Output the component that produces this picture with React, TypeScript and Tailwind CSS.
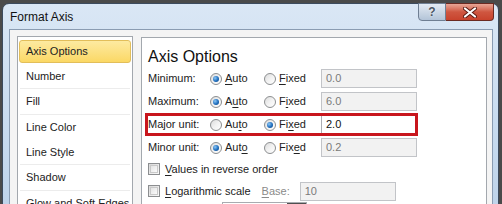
import React from "react";

const M = ({ children }: { children: React.ReactNode }) => (
  <span className="underline underline-offset-[2px] decoration-[1px]">{children}</span>
);

const Radio = ({ checked }: { checked?: boolean }) => (
  <span className="w-[12px] h-[12px] rounded-full border border-[#8c8e90] bg-gradient-to-br from-[#dcdcdc] via-[#f2f2f2] to-[#ffffff] flex items-center justify-center shrink-0">
    {checked && (
      <span className="w-[6px] h-[6px] rounded-full bg-[radial-gradient(circle_at_35%_35%,#8cc8f7,#1f6dbd_55%,#0b447f)]" />
    )}
  </span>
);

const Check = () => (
  <span className="w-[12px] h-[12px] border border-[#8c8e90] bg-gradient-to-br from-[#d8d8d8] to-[#fafafa] p-[1px] shrink-0">
    <span className="block w-full h-full border border-[#c9c9c9] bg-gradient-to-br from-[#e4e4e4] to-[#fbfbfb]" />
  </span>
);

const Box = ({ value, enabled }: { value: string; enabled?: boolean }) => (
  <div
    className={
      enabled
        ? "w-[96px] h-[19px] border border-[#abadb3] bg-white text-[#111] pl-[4px] flex items-center"
        : "w-[96px] h-[19px] border border-[#c2c4c8] bg-[#f2f2f2] text-[#7a7a7a] pl-[4px] flex items-center"
    }
  >
    {value}
  </div>
);

const Row = ({
  label,
  auto,
  fixed,
  autoChecked,
  value,
  enabled,
  highlight,
  h,
}: {
  label: string;
  auto: React.ReactNode;
  fixed: React.ReactNode;
  autoChecked: boolean;
  value: string;
  enabled?: boolean;
  highlight?: boolean;
  h: string;
}) => (
  <div className={`relative flex items-center ${h}`}>
    <span className="w-[62px] text-[#222]">{label}</span>
    <div className="w-[54px] flex items-center">
      <Radio checked={autoChecked} />
      <span className="ml-[3px] text-[#222]">{auto}</span>
    </div>
    <div className="w-[57px] flex items-center">
      <Radio checked={!autoChecked} />
      <span className="ml-[3px] text-[#222]">{fixed}</span>
    </div>
    <Box value={value} enabled={enabled} />
    {highlight && (
      <div className="absolute left-[-3px] top-[0px] w-[273px] h-[23px] border-[3px] border-[#c8161d]" />
    )}
  </div>
);

const ListItem = ({ label, h, sep }: { label: string; h: string; sep?: boolean }) => (
  <div className={`${h} mx-[2px] flex items-center pl-[6px] ${sep ? "border-t border-[#ececec]" : ""}`}>
    <span className="text-[#222]">{label}</span>
  </div>
);

export default function App() {
  return (
    <div className="w-[502px] h-[204px] overflow-hidden bg-[#4a4a4a] pt-[3px] pl-[2px] font-['Liberation_Sans',Arial,sans-serif] text-[11px] leading-none">
      <div className="w-[497px] h-[230px] rounded-t-[7px] border border-[#3c4b5e] bg-gradient-to-b from-[#dae7f5] via-[#c9dcf0] to-[#bcd1e8] flex flex-col">
        {/* title bar */}
        <div className="h-[25px] flex items-start shrink-0">
          <span className="pl-[7px] pt-[7px] text-[12px] text-[#111]">Format Axis</span>
          <div className="ml-auto mr-[4px] -mt-px flex">
            <div className="w-[28px] h-[18px] rounded-bl-[4px] border border-[#6f7f93] bg-gradient-to-b from-[#e3ebf4] via-[#cbd7e5] to-[#b3c4d8] flex items-center justify-center">
              <span className="text-[12px] font-bold text-[#4b5563] [text-shadow:0_0_2px_#fff]">?</span>
            </div>
            <div className="w-[48px] h-[18px] rounded-br-[4px] border border-l-0 border-[#6b2a22] bg-gradient-to-b from-[#e8a596] via-[#cf5640] to-[#c8432d] flex items-center justify-center">
              <svg width="14" height="11" viewBox="0 0 14 11">
                <path d="M2 1.5 L12 9.5 M12 1.5 L2 9.5" stroke="#5a1a12" strokeWidth="4" strokeLinecap="round" />
                <path d="M2 1.5 L12 9.5 M12 1.5 L2 9.5" stroke="#ffffff" strokeWidth="2.2" strokeLinecap="round" />
              </svg>
            </div>
          </div>
        </div>
        {/* client */}
        <div className="flex-1 ml-[6px] mr-[5px] border border-[#8a9cb2] bg-[#f4f4f4] flex items-start pl-[7px] pt-[6px]">
          {/* left list */}
          <div className="w-[116px] h-[200px] border border-[#a3a8ae] bg-white pt-[1px] shrink-0">
            <div className="h-[26px] flex items-center px-[1px]">
              <div className="w-full h-[23px] rounded-[3px] border border-[#e2be5a] bg-gradient-to-b from-[#fdeaa0] to-[#fbd864] flex items-center pl-[6px] text-[#222]">
                Axis Options
              </div>
            </div>
            <ListItem label="Number" h="h-[24px]" />
            <ListItem label="Fill" h="h-[26px]" sep />
            <ListItem label="Line Color" h="h-[26px]" sep />
            <ListItem label="Line Style" h="h-[24px]" />
            <ListItem label="Shadow" h="h-[26px]" sep />
            <ListItem label="Glow and Soft Edges" h="h-[26px]" sep />
          </div>
          {/* right pane */}
          <div className="ml-[8px] mt-[1px] w-[346px] h-[200px] border border-[#a3a8ae] bg-white pl-[6px] pt-[8px]">
            <div className="h-[21px] flex items-center text-[16px] text-[#111]">Axis Options</div>
            <Row label="Minimum:" auto={<><M>A</M>uto</>} fixed={<><M>F</M>ixed</>} autoChecked value="0.0" h="h-[23px]" />
            <Row label="Maximum:" auto={<>A<M>u</M>to</>} fixed={<>F<M>i</M>xed</>} autoChecked value="6.0" h="h-[23px]" />
            <Row label="Major unit:" auto={<>Au<M>t</M>o</>} fixed={<>Fi<M>x</M>ed</>} autoChecked={false} value="2.0" enabled highlight h="h-[23px]" />
            <Row label="Minor unit:" auto={<>Aut<M>o</M></>} fixed={<>Fix<M>e</M>d</>} autoChecked value="0.2" h="h-[23px]" />
            <div className="h-[20px] flex items-center">
              <Check />
              <span className="ml-[5px] text-[#222]"><M>V</M>alues in reverse order</span>
            </div>
            <div className="h-[24px] flex items-center">
              <Check />
              <span className="ml-[5px] text-[#222]"><M>L</M>ogarithmic scale</span>
              <span className="ml-[11px] text-[#8a8a8a]"><M>B</M>ase:</span>
              <div className="ml-[10px]">
                <Box value="10" />
              </div>
            </div>
            <div className="mt-[-1px] ml-[74px] w-[85px] h-[20px] border border-[#a8abb0] bg-white flex justify-end">
              <div className="w-[19px] h-full bg-[#4f4f4f]" />
            </div>
          </div>
        </div>
      </div>
    </div>
  );
}
